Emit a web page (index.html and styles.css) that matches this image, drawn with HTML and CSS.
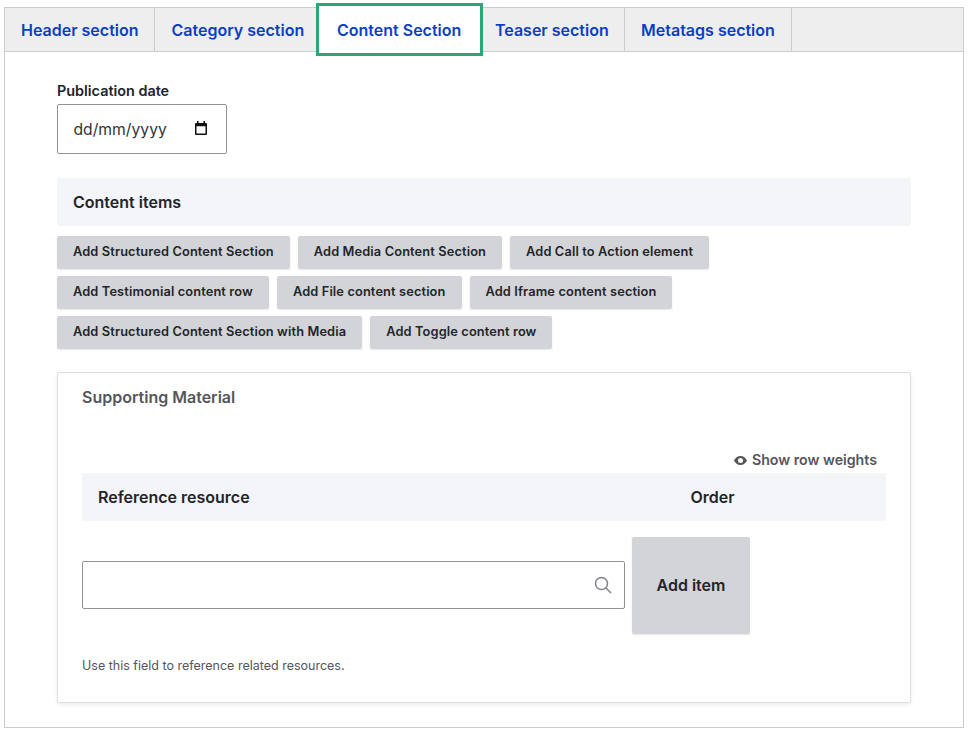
FILE: index.html
```html
<!DOCTYPE html>
<html lang="en">
<head>
    <meta charset="UTF-8">
    <meta name="viewport" content="width=device-width, initial-scale=1.0">
    <title>Content Section</title>
    <link rel="stylesheet" href="styles.css">
</head>
<body>
    <div class="page">
        <nav class="tabs">
            <a class="tab tab-header" href="#">Header section</a>
            <a class="tab tab-category" href="#">Category section</a>
            <a class="tab tab-active" href="#">Content Section</a>
            <a class="tab tab-teaser" href="#">Teaser section</a>
            <a class="tab tab-metatags" href="#">Metatags section</a>
        </nav>

        <div class="panel">
            <div class="date-field">
                <label class="date-label">Publication date</label>
                <div class="date-input">
                    <span>dd/mm/yyyy</span>
                    <svg class="date-icon" width="16" height="16" viewBox="0 0 16 16">
                        <path d="M4 1h1.6v2h4.8V1H12v2h1a1 1 0 0 1 1 1v10a1 1 0 0 1-1 1H3a1 1 0 0 1-1-1V4a1 1 0 0 1 1-1h1zM3.5 6.2v7.3h9V6.2z" fill="#111"/>
                    </svg>
                </div>
            </div>

            <div class="bar">Content items</div>
            <div class="btn-list">
                <button class="btn">Add Structured Content Section</button>
                <button class="btn">Add Media Content Section</button>
                <button class="btn">Add Call to Action element</button>
                <button class="btn">Add Testimonial content row</button>
                <button class="btn">Add File content section</button>
                <button class="btn">Add Iframe content section</button>
                <button class="btn">Add Structured Content Section with Media</button>
                <button class="btn">Add Toggle content row</button>
            </div>

            <div class="card">
                <h2 class="card-title">Supporting Material</h2>
                <div class="weights">
                    <svg width="13" height="9" viewBox="0 0 13 9">
                        <path d="M6.5 0C3.6 0 1.2 1.8 0 4.5 1.2 7.2 3.6 9 6.5 9s5.300-1.800 6.500-4.500C11.800 1.800 9.400 0 6.500 0zm0 7A2.500 2.500 0 1 1 6.500 2a2.500 2.500 0 0 1 0 5z" fill="#55565b"/>
                    </svg>
                    <a href="#">Show row weights</a>
                </div>
                <div class="table-head">
                    <span class="col-resource">Reference resource</span>
                    <span>Order</span>
                </div>
                <div class="add-row">
                    <div class="search">
                        <svg width="18" height="18" viewBox="0 0 18 18" fill="none" stroke="#828388" stroke-width="1.500">
                            <circle cx="7.500" cy="7.500" r="6"/>
                            <path d="M12 12l5 5"/>
                        </svg>
                    </div>
                    <button class="btn-add">Add item</button>
                </div>
                <p class="help">Use this field to reference related resources.</p>
            </div>
        </div>
    </div>
</body>
</html>
```

FILE: styles.css
```css
body {
    font-family: "Inter", "Liberation Sans", sans-serif;
    background-color: white;
    color: #232429;
    margin: 0;
    padding: 7px 5px 0 4px;
}

.page {
    border: 1px solid #cccccc;
    height: 721px;
    box-sizing: border-box;
}

.tabs {
    display: flex;
    height: 43px;
    background-color: #eeeeee;
    border-bottom: 1px solid #cccccc;
}

.tab {
    display: flex;
    align-items: center;
    box-sizing: border-box;
    height: 43px;
    font-size: 16px;
    font-weight: 600;
    color: #0b3fc2;
    text-decoration: none;
    border-right: 1px solid #cccccc;
}

.tab-header {
    width: 150px;
    padding-left: 16px;
}

.tab-category {
    width: 161px;
    padding-left: 16.5px;
    border-right: none;
}

.tab-active {
    width: 166.5px;
    height: 53px;
    margin-top: -5px;
    padding-left: 18px;
    background-color: white;
    border: 3px solid #2fa576;
    position: relative;
}

.tab-teaser {
    width: 142.5px;
    padding-left: 12.5px;
}

.tab-metatags {
    width: 167px;
    padding-left: 16px;
}

.panel {
    padding: 30px 52px 0 52px;
}

.date-label {
    display: block;
    font-size: 14.4px;
    font-weight: 600;
    line-height: 18px;
    margin-bottom: 4px;
}

.date-input {
    display: flex;
    align-items: center;
    justify-content: space-between;
    box-sizing: border-box;
    width: 170px;
    height: 50px;
    padding: 0 17px 0 15.5px;
    font-size: 15.7px;
    color: #333438;
    border: 1px solid #919297;
    border-radius: 2px;
}

.date-icon {
    margin-top: -2px;
}

.bar {
    margin-top: 24px;
    height: 48px;
    line-height: 48px;
    padding-left: 16px;
    font-size: 16px;
    font-weight: 600;
    background-color: #f3f5f8;
    border-radius: 2px;
}

.btn-list {
    display: flex;
    flex-wrap: wrap;
    gap: 7px 8px;
    margin-top: 10px;
}

.btn {
    height: 33px;
    padding: 0 16px 3px;
    font-family: inherit;
    font-size: 12.8px;
    font-weight: 600;
    letter-spacing: 0.13px;
    color: #232429;
    background-color: #d2d4d7;
    border: none;
    border-radius: 2px;
    box-shadow: 0 1px 2px rgba(0, 0, 0, 0.1);
}

.card {
    box-sizing: border-box;
    height: 331px;
    margin-top: 23px;
    padding: 15px 24px 0 24px;
    border: 1px solid #dedfe4;
    border-radius: 2px;
    box-shadow: 0 2px 4px rgba(0, 0, 0, 0.08);
}

.card-title {
    margin: 0;
    font-size: 16px;
    font-weight: 600;
    line-height: 18px;
    color: #55565b;
}

.weights {
    display: flex;
    align-items: center;
    justify-content: flex-end;
    gap: 5px;
    margin-top: 45px;
    padding-right: 9px;
    line-height: 18px;
}

.weights a {
    font-size: 14.2px;
    font-weight: 600;
    color: #55565b;
    text-decoration: none;
}

.table-head {
    display: flex;
    align-items: center;
    height: 48px;
    margin-top: 4px;
    padding-left: 16px;
    font-size: 16px;
    font-weight: 600;
    background-color: #f3f5f8;
    border-radius: 2px;
}

.col-resource {
    width: 592.5px;
}

.add-row {
    display: flex;
    align-items: flex-start;
    margin-top: 16px;
}

.search {
    display: flex;
    align-items: center;
    justify-content: flex-end;
    box-sizing: border-box;
    width: 543px;
    height: 48px;
    margin-top: 24px;
    padding-right: 12px;
    border: 1px solid #919297;
    border-radius: 2px;
}

.btn-add {
    width: 118px;
    height: 97px;
    margin-left: 7px;
    padding-bottom: 2px;
    font-family: inherit;
    font-size: 16px;
    font-weight: 600;
    color: #232429;
    background-color: #d2d4d7;
    border: none;
    border-radius: 2px;
    box-shadow: 0 1px 2px rgba(0, 0, 0, 0.1);
}

.help {
    margin: 24px 0 0 0;
    font-size: 12.5px;
    line-height: 16px;
    color: #55565b;
}
```
